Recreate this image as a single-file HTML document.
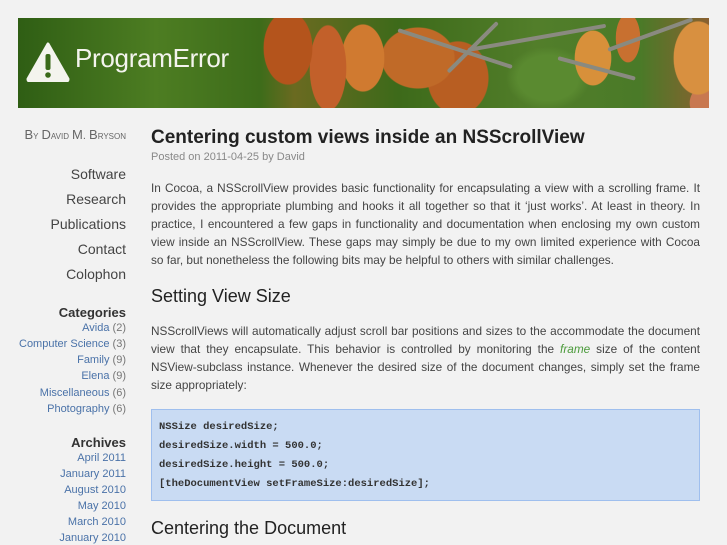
<!DOCTYPE html>
<html><head><meta charset="utf-8"><style>
*{margin:0;padding:0;box-sizing:border-box}
html,body{width:727px;height:545px;overflow:hidden;background:#f2f2f2;font-family:"Liberation Sans",sans-serif;color:#444}
#hdr{position:absolute;left:18px;top:18px;width:691px;height:90px;overflow:hidden;
background:
radial-gradient(ellipse 40px 60px at 270px 30px,#b4541c 60%,transparent 62%),
radial-gradient(ellipse 30px 70px at 310px 50px,#c2602a 60%,transparent 62%),
radial-gradient(ellipse 35px 55px at 345px 40px,#d07a30 60%,transparent 62%),
radial-gradient(ellipse 60px 50px at 400px 40px,#c06a28 60%,transparent 62%),
radial-gradient(ellipse 50px 60px at 440px 60px,#b85e22 60%,transparent 62%),
radial-gradient(ellipse 30px 45px at 575px 40px,#d8903a 60%,transparent 62%),
radial-gradient(ellipse 20px 40px at 610px 20px,#c87030 60%,transparent 62%),
radial-gradient(ellipse 40px 60px at 680px 40px,#d89040 60%,transparent 62%),
radial-gradient(ellipse 30px 30px at 690px 85px,#c87850 60%,transparent 62%),
radial-gradient(ellipse 60px 45px at 530px 60px,#5a8a30 50%,transparent 70%),
linear-gradient(90deg,#2f5e14 0%,#4d7d22 20%,#3d6c1a 35%,#6a6a20 40%,#3d6a1a 55%,#527e2a 75%,#4a7a28 90%,#8a6030 100%);}
.br{position:absolute;height:4px;background:#8a8a80;border-radius:2px;transform-origin:left center}
#logo{position:absolute;left:8px;top:24px}
#logo span{position:absolute;left:49px;top:1px;font-size:26px;color:#f4f4ee;white-space:nowrap;letter-spacing:-0.3px}
#side{position:absolute;left:0;width:126px;top:0;text-align:right}
.by{position:absolute;right:0;top:127px;font-size:11px;color:#666;font-variant:small-caps;white-space:nowrap}
.by b{font-weight:normal;font-size:13px}
.nav{position:absolute;right:0;font-size:14px;color:#444;white-space:nowrap}
.h3{position:absolute;right:0;font-size:13px;font-weight:bold;color:#333}
.li{position:absolute;right:0;font-size:11px;color:#4a72a8;white-space:nowrap}
.li i{font-style:normal;color:#777}
#main{position:absolute;left:151px;top:0;width:549px}
h1{position:absolute;top:127px;font-size:19px;font-weight:bold;color:#222;white-space:nowrap}
.post{position:absolute;top:151px;font-size:11px;color:#888}
p{position:absolute;font-size:11.8px;line-height:18px;text-align:justify;color:#444;width:549px}
h2{position:absolute;font-size:18px;font-weight:normal;color:#222;white-space:nowrap}
pre{position:absolute;top:409px;width:549px;height:92px;background:#c9dbf3;border:1px solid #9fbfee;padding:8px 7px;font-family:"Liberation Mono",monospace;font-size:10.5px;font-weight:bold;line-height:19px;color:#333}
em{color:#4a9a3a}
</style></head><body>
<div id="hdr">
<div class="br" style="left:380px;top:10px;width:120px;transform:rotate(18deg)"></div>
<div class="br" style="left:450px;top:30px;width:140px;transform:rotate(-10deg)"></div>
<div class="br" style="left:430px;top:52px;width:70px;transform:rotate(-45deg)"></div>
<div class="br" style="left:540px;top:38px;width:80px;transform:rotate(15deg)"></div>
<div class="br" style="left:590px;top:30px;width:90px;transform:rotate(-20deg)"></div>
<div id="logo"><svg width="44" height="40" viewBox="0 0 44 40"><path d="M22 2 L42 37 Q42 39 40 39 L4 39 Q2 39 2 37 Z" fill="#f4f4ee" stroke="#f4f4ee" stroke-linejoin="round" stroke-width="3"/><rect x="19.5" y="12" width="5" height="16" rx="2" fill="#3a6a1a"/><circle cx="22" cy="33" r="2.8" fill="#3a6a1a"/></svg><span>ProgramError</span></div>
</div>
<div id="side">
<div class="by"><b>B</b>y <b>D</b>avid <b>M</b>. <b>B</b>ryson</div>
<div class="nav" style="top:166px">Software</div>
<div class="nav" style="top:191px">Research</div>
<div class="nav" style="top:216px">Publications</div>
<div class="nav" style="top:241px">Contact</div>
<div class="nav" style="top:266px">Colophon</div>
<div class="h3" style="top:305px">Categories</div>
<div class="li" style="top:322px">Avida <i>(2)</i></div>
<div class="li" style="top:338px">Computer Science <i>(3)</i></div>
<div class="li" style="top:354px">Family <i>(9)</i></div>
<div class="li" style="top:370px">Elena <i>(9)</i></div>
<div class="li" style="top:387px">Miscellaneous <i>(6)</i></div>
<div class="li" style="top:403px">Photography <i>(6)</i></div>
<div class="h3" style="top:435px">Archives</div>
<div class="li" style="top:452px">April 2011</div>
<div class="li" style="top:468px">January 2011</div>
<div class="li" style="top:484px">August 2010</div>
<div class="li" style="top:500px">May 2010</div>
<div class="li" style="top:516px">March 2010</div>
<div class="li" style="top:532px">January 2010</div>
</div>
<div id="main">
<h1>Centering custom views inside an NSScrollView</h1>
<div class="post">Posted on 2011-04-25 by David</div>
<p style="top:179px">In Cocoa, a NSScrollView provides basic functionality for encapsulating a view with a scrolling frame. It provides the appropriate plumbing and hooks it all together so that it ‘just works’. At least in theory. In practice, I encountered a few gaps in functionality and documentation when enclosing my own custom view inside an NSScrollView. These gaps may simply be due to my own limited experience with Cocoa so far, but nonetheless the following bits may be helpful to others with similar challenges.</p>
<h2 style="top:286px">Setting View Size</h2>
<p style="top:322px">NSScrollViews will automatically adjust scroll bar positions and sizes to the accommodate the document view that they encapsulate. This behavior is controlled by monitoring the <em>frame</em> size of the content NSView-subclass instance. Whenever the desired size of the document changes, simply set the frame size appropriately:</p>
<pre>NSSize desiredSize;
desiredSize.width = 500.0;
desiredSize.height = 500.0;
[theDocumentView setFrameSize:desiredSize];</pre>
<h2 style="top:518px">Centering the Document</h2>
</div>
</body></html>
